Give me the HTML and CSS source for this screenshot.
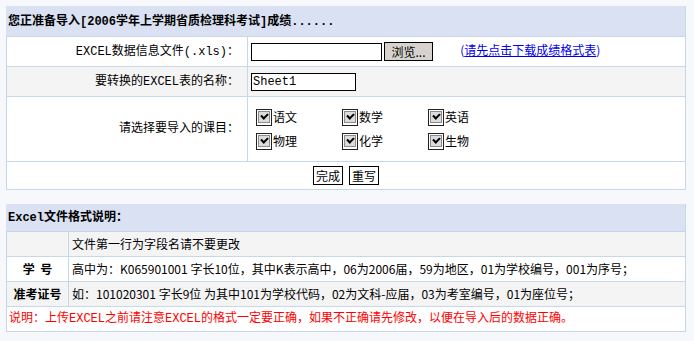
FILE: index.html
```html
<!DOCTYPE html>
<html lang="zh-CN">
<head>
    <meta charset="UTF-8">
    <title>导入成绩</title>
    <link rel="stylesheet" href="styles.css">
</head>
<body>
    <table class="box">
        <tr class="head"><td colspan="2">您正准备导入[2006学年上学期省质检理科考试]成绩......</td></tr>
        <tr class="row-h">
            <td class="label">EXCEL数据信息文件(.xls)：</td>
            <td class="field">
                <span class="input file"></span><span class="btn browse">浏览...</span>
                <a class="tpl" href="#">(<u>请先点击下载成绩格式表</u>)</a>
            </td>
        </tr>
        <tr class="row-h gray">
            <td class="label">要转换的EXCEL表的名称：</td>
            <td class="field"><span class="input sheet">Sheet1</span></td>
        </tr>
        <tr class="row-check">
            <td class="label">请选择要导入的课目：</td>
            <td class="field">
                <div class="subjects">
                    <label class="subj"><i class="cb"></i>语文</label>
                    <label class="subj"><i class="cb"></i>数学</label>
                    <label class="subj"><i class="cb"></i>英语</label>
                    <label class="subj"><i class="cb"></i>物理</label>
                    <label class="subj"><i class="cb"></i>化学</label>
                    <label class="subj"><i class="cb"></i>生物</label>
                </div>
            </td>
        </tr>
        <tr class="row-btn">
            <td colspan="2"><span class="btn">完成</span><span class="btn">重写</span></td>
        </tr>
    </table>

    <table class="box info">
        <tr class="head"><td colspan="2">Excel文件格式说明：</td></tr>
        <tr class="gray">
            <td class="key"></td>
            <td class="desc">文件第一行为字段名请不要更改</td>
        </tr>
        <tr>
            <td class="key">学&nbsp;&nbsp;号</td>
            <td class="desc">高中为：K065901001 字长10位，其中K表示高中，06为2006届，59为地区，01为学校编号，001为序号；</td>
        </tr>
        <tr class="gray">
            <td class="key">准考证号</td>
            <td class="desc">如：101020301 字长9位 为其中101为学校代码，02为文科-应届，03为考室编号，01为座位号；</td>
        </tr>
        <tr>
            <td colspan="2" class="note">说明：上传EXCEL之前请注意EXCEL的格式一定要正确，如果不正确请先修改，以便在导入后的数据正确。</td>
        </tr>
    </table>
</body>
</html>
```

FILE: styles.css
```css
body{
    margin: 6px;
    background-color: #f6f8fb;
    font-family: "Liberation Mono", "Noto Sans CJK SC", monospace;
    font-size: 12px;
    color: #000;
}
.box{
    width: 680px;
    border-collapse: collapse;
    background-color: #fff;
    border: 1px solid #c6d7e8;
}
.box td{
    border: 1px solid #c6d7e8;
    padding: 0;
    line-height: 14px;
}
.head td{
    background-color: #d9e1f2;
    height: 29px;
    font-weight: bold;
    padding-left: 1px;
    border-color: #d9e1f2 #c6d7e8 #c6d7e8 #d9e1f2;
}
.gray td{
    background-color: #f4f4f4;
}
.row-h td{
    height: 29px;
}
.label{
    width: 232px;
    text-align: right;
    padding-right: 8px !important;
}
.field{
    padding-left: 3px !important;
}
.input{
    display: inline-block;
    vertical-align: middle;
    height: 16px;
    border: 1px solid #000;
    background: #fff;
    line-height: 16px;
    padding-left: 1px;
}
.file{
    width: 128px;
}
.sheet{
    width: 102px;
}
.btn{
    display: inline-block;
    vertical-align: middle;
    height: 17px;
    line-height: 17px;
    padding: 0 2px;
    border: 1px solid #000;
    background: #f0f0f0;
    font-family: "Noto Sans CJK SC", sans-serif;
}
.browse{
    width: 43px;
    margin-left: 2px;
    background: #d6d3ce;
    text-align: center;
}
.tpl{
    margin-left: 20px;
    color: #0000ee;
    text-decoration: none;
    font-family: "Noto Sans CJK SC", sans-serif;
}
.tpl u{
    color: #0000ee;
}
.row-check td{
    height: 64px;
}
.subjects{
    display: grid;
    grid-template-columns: repeat(3, 86px);
    row-gap: 7px;
    padding-left: 5px;
    font-family: "Noto Sans CJK SC", sans-serif;
}
.subj{
    display: flex;
    align-items: center;
}
.cb{
    width: 14px;
    height: 15px;
    border: 1px solid #222;
    background: #fff;
    position: relative;
    margin-right: 1px;
}
.cb::before{
    content: "";
    position: absolute;
    left: 1px;
    top: 1px;
    width: 10px;
    height: 10px;
    border: 1px solid #8a8a8a;
    background: #dcdcdc;
}
.cb::after{
    content: "";
    position: absolute;
    left: 4px;
    top: 3px;
    width: 5px;
    height: 3px;
    border-left: 2px solid #000;
    border-bottom: 2px solid #000;
    transform: rotate(-45deg);
}
.row-btn td{
    height: 27px;
    text-align: center;
}
.row-btn .btn{
    background: #fff;
    margin: 0 3px;
}
.info{
    margin-top: 14px;
}
.info .head td{
    height: 26px;
}
.info td{
    height: 24px;
}
.key{
    width: 61px;
    text-align: center;
    font-weight: bold;
    font-family: "Noto Sans CJK SC", sans-serif;
}
.desc{
    padding-left: 3px !important;
    font-family: "Noto Sans CJK SC", sans-serif;
}
.note{
    color: #f00;
    padding-left: 2px !important;
}
```
